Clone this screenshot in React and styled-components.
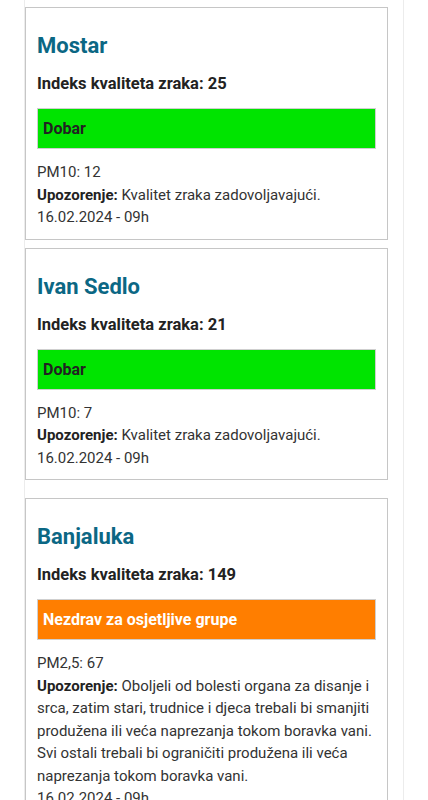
import React from "react";
import styled, { createGlobalStyle } from "styled-components";

const Global = createGlobalStyle`
  html, body { margin: 0; padding: 0; background: #fff; }
  body { font-family: Roboto, "Noto Sans", "Liberation Sans", sans-serif; }
  * { box-sizing: border-box; }
`;

const Column = styled.div`
  margin-left: 24px;
  width: 380px;
  min-height: 800px;
  border-left: 1px solid #ececec;
  border-right: 1px solid #ececec;
  padding-top: 7px;
  display: flex;
  flex-direction: column;
  align-items: flex-start;
`;

const Card = styled.section`
  width: 363px;
  border: 1px solid #c6c6c6;
  padding: 25px 11px 10px 11px;
  margin-bottom: 8px;
  margin-top: ${(p) => (p.$extraTop ? "10px" : "0")};
  background: #fff;
`;

const Title = styled.h2`
  margin: 0;
  font-size: 22px;
  font-weight: 700;
  line-height: normal;
  color: #0b6784;
`;

const Index = styled.div`
  margin-top: 16px;
  font-size: 16.5px;
  font-weight: 700;
  line-height: normal;
  color: #222;
`;

const Status = styled.div`
  margin-top: 15px;
  border: 1px solid #cfcfcf;
  background: ${(p) => p.$bg};
  color: ${(p) => p.$fg};
  padding: 10px 5px;
  font-size: 16px;
  font-weight: 700;
  line-height: 19px;
`;

const Body = styled.div`
  margin-top: 12px;
  font-size: 15px;
  line-height: 22.5px;
  color: #333;
`;

const Line = styled.div``;

const Strong = styled.b`
  font-weight: 700;
  color: #222;
`;

const levels = {
  good: { bg: "#00e400", fg: "#222", label: "Dobar" },
  sensitive: { bg: "#ff7e00", fg: "#fff", label: "Nezdrav za osjetljive grupe" },
};

const data = [
  {
    city: "Mostar",
    aqi: 25,
    level: "good",
    pm: "PM10: 12",
    warn: "Kvalitet zraka zadovoljavajući.",
    date: "16.02.2024 - 09h",
  },
  {
    city: "Ivan Sedlo",
    aqi: 21,
    level: "good",
    pm: "PM10: 7",
    warn: "Kvalitet zraka zadovoljavajući.",
    date: "16.02.2024 - 09h",
  },
  {
    city: "Banjaluka",
    aqi: 149,
    level: "sensitive",
    pm: "PM2,5: 67",
    warn:
      "Oboljeli od bolesti organa za disanje i srca, zatim stari, trudnice i djeca trebali bi smanjiti produžena ili veća naprezanja tokom boravka vani. Svi ostali trebali bi ograničiti produžena ili veća naprezanja tokom boravka vani.",
    date: "16.02.2024 - 09h",
    extraTop: true,
  },
];

export default function App() {
  return (
    <>
      <Global />
      <Column>
        {data.map((d) => {
          const lv = levels[d.level];
          return (
            <Card key={d.city} $extraTop={d.extraTop}>
              <Title>{d.city}</Title>
              <Index>Indeks kvaliteta zraka: {d.aqi}</Index>
              <Status $bg={lv.bg} $fg={lv.fg}>
                {lv.label}
              </Status>
              <Body>
                <Line>{d.pm}</Line>
                <Line>
                  <Strong>Upozorenje:</Strong> {d.warn}
                </Line>
                <Line>{d.date}</Line>
              </Body>
            </Card>
          );
        })}
      </Column>
    </>
  );
}
